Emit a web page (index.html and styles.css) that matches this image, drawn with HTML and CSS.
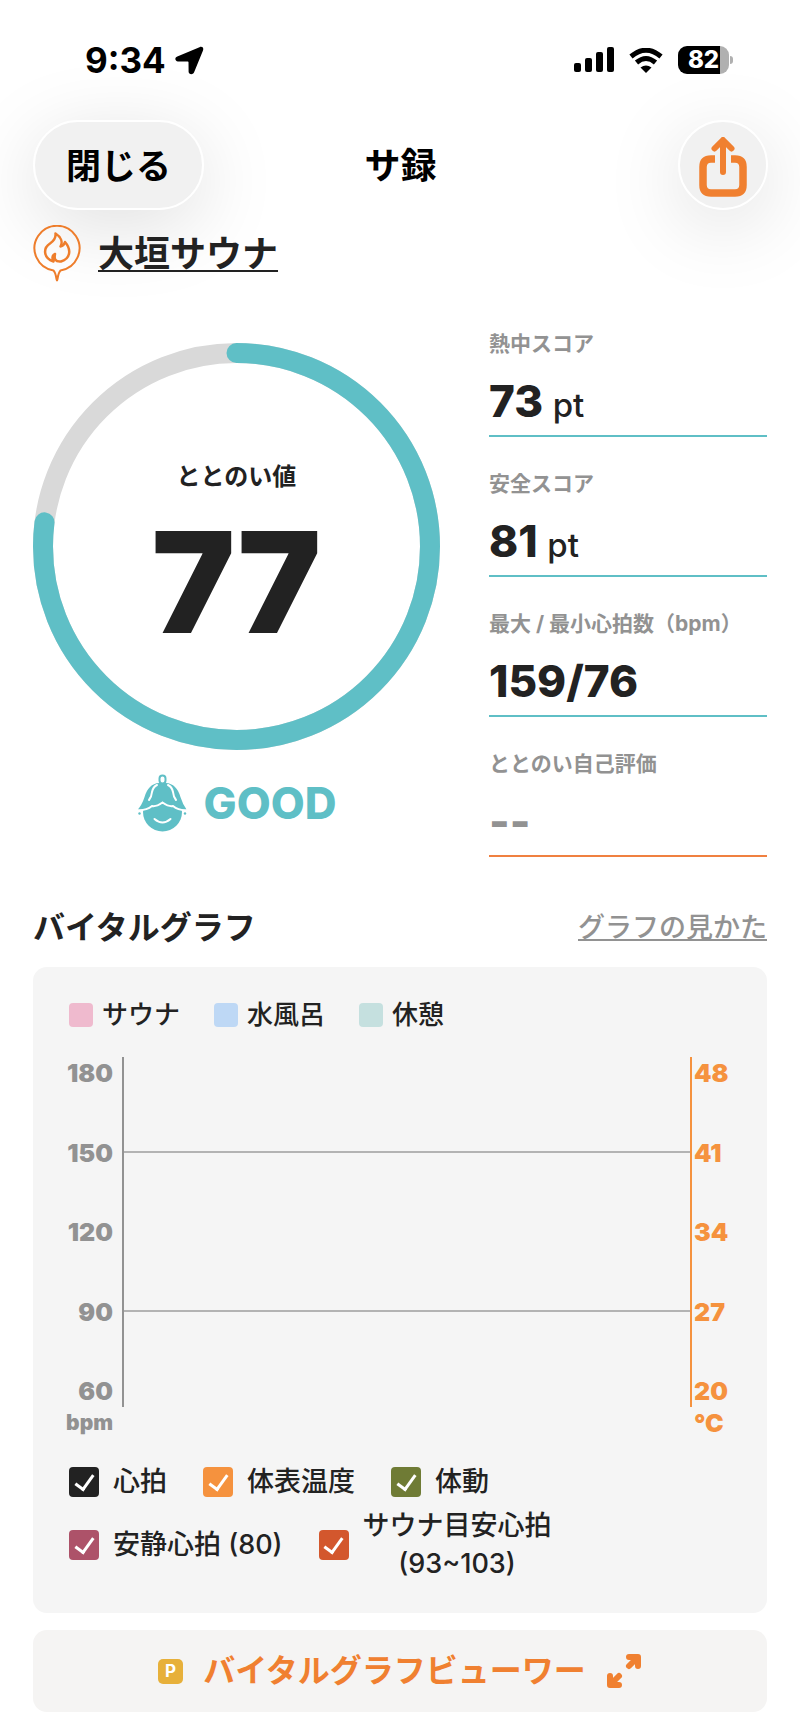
FILE: index.html
```
<!DOCTYPE html>
<html lang="ja">

<head>
    <meta charset="UTF-8">
    <meta name="viewport" content="width=device-width, initial-scale=1.0">
    <title>サ録</title>
    <link rel="stylesheet" href="styles.css">
</head>

<body>

    <div class="status-bar">
        <div class="status-left">
            <span class="time">9:34</span>
            <svg width="29" height="29" viewBox="0 0 29 29">
                <path d="M24.500 1.200 C27 0 29 1.700 28 4.400 L19 26.500 C17.600 29.200 13.600 28.300 13.600 25.800 L13.500 16.200 Q13.500 15.500 12.800 15.500 L3 15.400 C-.2 15.400 -.6 11.600 2.300 10.500 Z" />
            </svg>
        </div>
        <div class="status-right">
            <svg width="40" height="26" viewBox="0 0 40 26">
                <rect x="0" y="16" width="7" height="9" rx="2" />
                <rect x="11" y="11" width="7" height="14" rx="2" />
                <rect x="22" y="5" width="7" height="20" rx="2" />
                <rect x="33" y="0" width="7" height="25" rx="2" />
            </svg>
            <svg width="34" height="25" viewBox="0 0 34 25">
                <path d="M2 8.500 Q17 -4 32 8.500" fill="none" stroke="#000" stroke-width="5" />
                <path d="M7.500 14.500 Q17 6.500 26.500 14.500" fill="none" stroke="#000" stroke-width="5" />
                <path d="M11.500 19.500 Q17 15.500 22.500 19.500 L17 25 Z" />
            </svg>
            <div class="battery"><span class="battery-level">82</span></div>
        </div>
    </div>

    <header class="nav">
        <button type="button" class="close-button">閉じる</button>
        <h1>サ録</h1>
        <button type="button" class="share-button" aria-label="共有">
            <svg width="48" height="60" viewBox="0 0 48 60" fill="none" stroke="#f08030" stroke-linecap="round" stroke-linejoin="round">
                <path d="M16 22 H12 Q4 22 4 30 V48 Q4 56 12 56 H36 Q44 56 44 48 V30 Q44 22 36 22 H32" stroke-width="7.500" stroke-linecap="butt" />
                <path d="M24 35 V4 M15.500 11.500 L24 3 L32.500 11.500" stroke-width="6" />
            </svg>
        </button>
    </header>

    <main>
        <div class="venue">
            <svg width="48" height="57" viewBox="0 0 48 57" fill="none" stroke="#ee7d2b" stroke-width="2" stroke-linejoin="round">
                <path d="M20.500 45.500 A22.500 22.500 0 1 1 27.500 45.500 Q25.500 47.500 24.500 54 Q24 57 23.500 54 Q22.500 47.500 20.500 45.500 Z" />
                <path d="M20.500 36.500 C10 33 10 23 17 18.500 C22 15 23 12 22.500 8.500 C28 12 30 17 27.500 21.500 Q31 21 32 17 C39 25 37 34 28 36.500 C22 37 21 34 22 29 C19 30 19 34 20.500 36.500 Z" stroke-width="2.500" />
            </svg>
            <a href="#">大垣サウナ</a>
        </div>

        <section class="summary">
            <div class="score">
                <div class="ring">
                    <svg viewBox="0 0 407 407" fill="none" stroke-width="20">
                        <circle cx="203.500" cy="203.500" r="193.500" stroke="#d9d9d9" />
                        <circle cx="203.500" cy="203.500" r="193.500" stroke="#5fbfc6" stroke-linecap="round" pathLength="100" stroke-dasharray="77 100" transform="rotate(-90 203.500 203.500)" />
                    </svg>
                    <div class="ring-text">
                        <span class="ring-label">ととのい値</span>
                        <span class="ring-value">77</span>
                    </div>
                </div>
                <div class="rank">
                    <svg width="50" height="58" viewBox="0 0 50 58">
                        <circle cx="25.500" cy="38" r="19.500" />
                        <path d="M-1 36 Q4 31 6.500 23 C9 14 14 8.500 22 8 H29 C37 8.500 42 14 44.500 23 Q47 31 51 36 Q42 37 36 32 Q32 33 25.500 28.500 Q19 33 15 32 Q9 37 -1 36 Z" stroke="#fff" stroke-width="2" />
                        <rect x="22.500" y="1.500" width="6" height="8" rx="3" fill="#fff" stroke="#5fbfc6" stroke-width="2" />
                        <path d="M20 11 Q16 13 15 18 Q14.500 23 12 26 M31 11 Q35 13 36 18 Q36.500 23 39 26" fill="none" stroke="#fff" stroke-width="2" stroke-linecap="round" />
                        <path d="M17.500 45 Q25.500 52 33.500 45" fill="none" stroke="#fff" stroke-width="2" stroke-linecap="round" />
                        <circle cx="2.500" cy="39.500" r="1.200" />
                        <circle cx="48" cy="39.500" r="1.200" />
                    </svg>
                    <span>GOOD</span>
                </div>
            </div>

            <dl class="stats">
                <div class="stat">
                    <dt>熱中スコア</dt>
                    <dd>73 <small>pt</small></dd>
                </div>
                <div class="stat">
                    <dt>安全スコア</dt>
                    <dd>81 <small>pt</small></dd>
                </div>
                <div class="stat">
                    <dt>最大 / 最小心拍数（bpm）</dt>
                    <dd>159/76</dd>
                </div>
                <div class="stat stat-self">
                    <dt>ととのい自己評価</dt>
                    <dd>--</dd>
                </div>
            </dl>
        </section>

        <div class="section-head">
            <h2>バイタルグラフ</h2>
            <a href="#">グラフの見かた</a>
        </div>

        <section class="graph-card">
            <ul class="legend">
                <li><span class="swatch sauna"></span>サウナ</li>
                <li><span class="swatch water"></span>水風呂</li>
                <li><span class="swatch rest"></span>休憩</li>
            </ul>

            <div class="chart">
                <div class="axis axis-bpm">
                    <span>180</span>
                    <span>150</span>
                    <span>120</span>
                    <span>90</span>
                    <span>60</span>
                </div>
                <div class="plot">
                    <div class="grid-line"></div>
                    <div class="grid-line"></div>
                </div>
                <div class="axis axis-temp">
                    <span>48</span>
                    <span>41</span>
                    <span>34</span>
                    <span>27</span>
                    <span>20</span>
                </div>
                <span class="unit-bpm">bpm</span>
                <span class="unit-temp">°C</span>
            </div>

            <div class="toggles">
                <label><input type="checkbox" class="heart" checked>心拍</label>
                <label><input type="checkbox" class="temp" checked>体表温度</label>
                <label><input type="checkbox" class="motion" checked>体動</label>
            </div>
            <div class="toggles">
                <label><input type="checkbox" class="resting" checked>安静心拍 (80)</label>
                <label><input type="checkbox" class="target" checked><span>サウナ目安心拍<br>(93~103)</span></label>
            </div>
        </section>

        <button type="button" class="viewer-button">
            <span class="premium">P</span>
            バイタルグラフビューワー
            <svg width="36" height="36" viewBox="0 0 36 36" fill="none" stroke="#f08030" stroke-width="6" stroke-linecap="round" stroke-linejoin="round">
                <path d="M23 4 H32 V13 M31 5 L23 13" />
                <path d="M4 23 V32 H13 M5 31 L13 23" />
            </svg>
        </button>
    </main>

</body>

</html>
```
FILE: styles.css
```
* {
    box-sizing: border-box;
}

body {
    margin: 0;
    background-color: #fff;
    color: #222;
    font-family: Inter, "Noto Sans CJK JP", sans-serif;
}

button {
    border: none;
    padding: 0;
    font-family: inherit;
    cursor: pointer;
}

/* Status bar */
.status-bar {
    display: flex;
    justify-content: space-between;
    height: 120px;
    padding: 40px 67px 0 85px;
    color: #000;
}

.status-left,
.status-right {
    display: flex;
    align-items: center;
    height: 40px;
}

.status-left {
    gap: 9px;
}

.status-right {
    gap: 15px;
}

.time {
    font-size: 35px;
    font-weight: 700;
}

.battery {
    position: relative;
    width: 51px;
    height: 28px;
    margin-right: 4px;
    border-radius: 9px;
    background: linear-gradient(to right, #000 82%, #b0b0b0 82%);
}

.battery::after {
    content: "";
    position: absolute;
    right: -4px;
    top: 10px;
    width: 3px;
    height: 8px;
    border-radius: 0 4px 4px 0;
    background-color: #b0b0b0;
}

.battery-level {
    display: block;
    color: #fff;
    font-size: 24px;
    font-weight: 800;
    line-height: 28px;
    text-align: center;
}

/* Navigation */
.nav {
    display: grid;
    grid-template-columns: 1fr auto 1fr;
    align-items: center;
    padding: 0 32px 0 33px;
}

.nav h1 {
    margin: 0;
    padding-bottom: 4px;
    color: #000;
    font-size: 36px;
    font-weight: 700;
}

.close-button,
.share-button {
    height: 90px;
    border: 2px solid #fff;
    border-radius: 45px;
    background-color: #f1f1f1;
    box-shadow: 0 16px 80px rgba(0, 0, 0, 0.13);
}

.close-button {
    justify-self: start;
    padding: 0 31px 4px;
    color: #000;
    font-size: 35px;
    font-weight: 600;
}

.share-button {
    display: flex;
    align-items: center;
    justify-content: center;
    justify-self: end;
    width: 90px;
    padding-top: 4px;
}

main {
    padding: 0 33px 22px;
}

/* Venue */
.venue {
    position: relative;
    display: flex;
    align-items: center;
    gap: 17px;
    margin-top: 15px;
}

.venue a {
    color: #222;
    font-size: 36px;
    font-weight: 700;
    line-height: 56px;
    text-underline-offset: 3px;
    text-decoration-thickness: 2px;
    text-decoration-skip-ink: none;
}

/* Summary */
.summary {
    display: grid;
    grid-template-columns: minmax(0, 407fr) minmax(0, 278fr);
    gap: 49px;
    margin-top: 48px;
}

.score {
    padding-top: 13px;
}

.ring {
    display: grid;
}

.ring > * {
    grid-area: 1 / 1;
}

.ring svg {
    display: block;
    width: 100%;
}

.ring-text {
    display: flex;
    flex-direction: column;
    align-items: center;
    padding-top: 114px;
}

.ring-label {
    font-size: 24px;
    font-weight: 700;
    line-height: 40px;
}

.ring-value {
    font-size: 140px;
    font-weight: 900;
    line-height: 170px;
}

.rank {
    display: flex;
    align-items: center;
    justify-content: center;
    gap: 17px;
    margin-top: 24px;
    color: #5fbfc6;
    font-size: 44px;
    font-weight: 800;
    line-height: 58px;
}

.rank svg {
    fill: #5fbfc6;
}

.stats {
    display: flex;
    flex-direction: column;
    gap: 33px;
    margin: 0;
}

.stat {
    padding-bottom: 3px;
    border-bottom: 2px solid #5fbfc6;
}

.stat dt {
    color: #929292;
    font-size: 21px;
    font-weight: 700;
    line-height: 28px;
    white-space: nowrap;
}

.stat dd {
    height: 60px;
    margin: 14px 0 0;
    font-size: 44px;
    font-weight: 800;
    line-height: 58px;
}

.stat small {
    font-size: 33px;
    font-weight: 500;
}

.stat-self {
    border-color: #f08040;
}

.stat-self dd {
    color: #929292;
}

/* Vital graph */
.section-head {
    display: flex;
    align-items: center;
    justify-content: space-between;
    margin-top: 48px;
}

.section-head h2 {
    margin: 0;
    font-size: 32px;
    font-weight: 700;
    line-height: 46px;
}

.section-head a {
    color: #929292;
    font-size: 27px;
    font-weight: 500;
    line-height: 46px;
    text-underline-offset: 2px;
    text-decoration-thickness: 2px;
    text-decoration-skip-ink: none;
}

.graph-card {
    margin-top: 16px;
    padding: 32px 32px 30px;
    border-radius: 14px;
    background-color: #f5f5f5;
}

.legend {
    display: flex;
    gap: 34px;
    margin: 0 0 26px;
    padding: 0 4px;
    list-style: none;
    font-size: 26px;
    font-weight: 500;
    line-height: 32px;
}

.legend li {
    display: flex;
    align-items: center;
    gap: 9px;
}

.swatch {
    width: 24px;
    height: 24px;
    border-radius: 4px;
}

.sauna {
    background-color: #efbace;
}

.water {
    background-color: #bed8f5;
}

.rest {
    background-color: #c5e0df;
}

.chart {
    display: grid;
    grid-template-columns: 57px 1fr 43px;
    font-size: 25px;
    font-weight: 900;
    line-height: 32px;
}

.axis {
    display: flex;
    flex-direction: column;
    justify-content: space-between;
    height: 350px;
}

.axis-bpm {
    padding-right: 9px;
    color: #929292;
    text-align: right;
}

.axis-temp {
    padding-left: 2px;
    color: #f5923e;
}

.plot {
    display: grid;
    grid-template-rows: 96px 159px 1fr;
    border-left: 2px solid #929292;
    border-right: 2px solid #f5923e;
}

.grid-line {
    border-bottom: 2px solid #b3b3b3;
}

.unit-bpm {
    padding-right: 9px;
    color: #929292;
    font-size: 21px;
    text-align: right;
}

.unit-temp {
    grid-column: 3;
    padding-left: 2px;
    color: #f5923e;
}

.toggles {
    display: flex;
    gap: 36px;
    margin-top: 6px;
    padding: 0 4px;
    font-size: 27px;
    font-weight: 500;
    line-height: 38px;
}

.chart + .toggles {
    margin-top: 24px;
}

.toggles label {
    display: flex;
    align-items: center;
    gap: 14px;
    text-align: center;
}

.toggles input {
    appearance: none;
    display: flex;
    align-items: center;
    justify-content: center;
    width: 30px;
    height: 30px;
    margin: 0;
    border-radius: 4px;
}

.toggles input:checked::before {
    content: "";
    width: 8px;
    height: 16px;
    margin-bottom: 3px;
    border: solid #fff;
    border-width: 0 3px 3px 0;
    transform: rotate(36deg);
}

.heart {
    background-color: #222;
}

.temp {
    background-color: #f5923e;
}

.motion {
    background-color: #6f7b35;
}

.resting {
    background-color: #ad5269;
}

.target {
    background-color: #d3572d;
}

.viewer-button {
    display: flex;
    align-items: center;
    justify-content: center;
    gap: 20px;
    width: 100%;
    height: 82px;
    margin-top: 17px;
    border-radius: 14px;
    background-color: #f5f4f3;
    color: #f08030;
    font-size: 32px;
    font-weight: 700;
    line-height: 40px;
}

.premium {
    width: 25px;
    height: 25px;
    border-radius: 5px;
    background-color: #e7b03a;
    color: #fff;
    font-size: 17px;
    line-height: 25px;
}
```
